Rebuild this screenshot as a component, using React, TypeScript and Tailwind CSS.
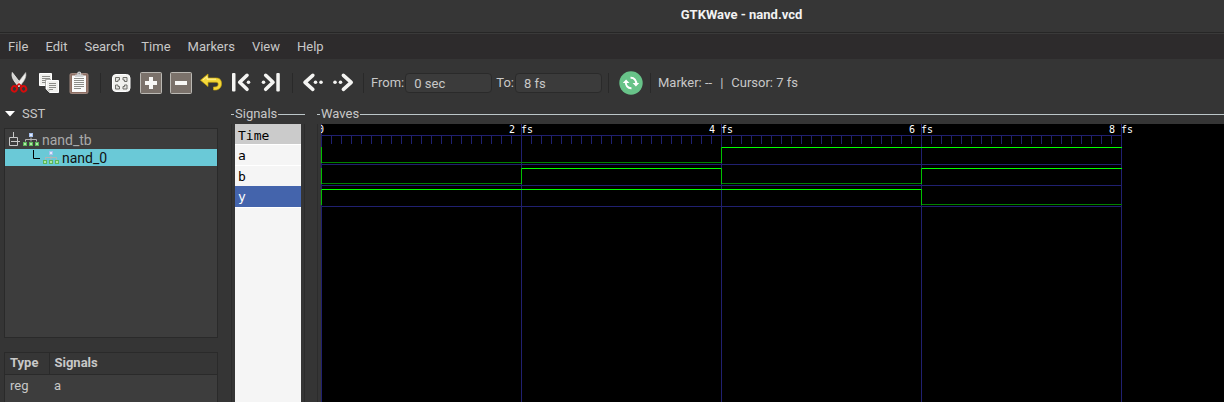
import { useState } from 'react';
import type { ReactNode } from 'react';

const MENUS = ['File', 'Edit', 'Search', 'Time', 'Markers', 'View', 'Help'];

const FS_WIDTH = 100;
const END_FS = 8;
const ROW = 21;

type Trace = { name: string; start: 0 | 1; toggles: number[] };

const TRACES: Trace[] = [
  { name: 'a', start: 0, toggles: [4] },
  { name: 'b', start: 0, toggles: [2, 4, 6] },
  { name: 'y', start: 1, toggles: [6] },
];

function Icon({ children }: { children: ReactNode }) {
  return (
    <svg viewBox="0 0 24 24" className="size-6" aria-hidden="true">
      {children}
    </svg>
  );
}

function Lines({ x, ys, w }: { x: number; ys: number[]; w: number }) {
  return (
    <>
      {ys.map((y, i) => (
        <rect key={y} x={x} y={y} width={i === ys.length - 1 ? w - 3 : w} height="1" fill="#8c8c88" />
      ))}
    </>
  );
}

const CutIcon = () => (
  <Icon>
    <path d="M5.3 1.5c-1 3.500 .6 6.800 2.500 9.400l3.800 4.800 2.600-2.600z" fill="#d4d4d2" stroke="#f2f2f0" strokeWidth=".8" />
    <path d="M18.700 1.500c1 3.500-.6 6.800-2.500 9.400l-3.800 4.800-2.600-2.600z" fill="#efefed" stroke="#b8b8b6" strokeWidth=".6" />
    <path d="M9 15.500 12 13l3 2.500" stroke="#d40c0c" strokeWidth="1.600" fill="none" />
    <ellipse cx="7.400" cy="17.800" rx="2.600" ry="2.800" fill="none" stroke="#d40c0c" strokeWidth="2" transform="rotate(25 7.400 17.800)" />
    <ellipse cx="16.600" cy="17.800" rx="2.600" ry="2.800" fill="none" stroke="#d40c0c" strokeWidth="2" transform="rotate(-25 16.600 17.800)" />
  </Icon>
);

const CopyIcon = () => (
  <Icon>
    <path d="M2.500 2.500h12v9l-3 3h-9z" fill="#f0f0ed" stroke="#fff" />
    <Lines x={5} ys={[5, 7, 9, 11]} w={8} />
    <path d="M9.500 9.500h12v12h-9l-3-3z" fill="#f0f0ed" stroke="#fff" />
    <path d="M8.500 18V8.500H14" fill="none" stroke="#9a9a96" strokeWidth=".8" />
    <Lines x={12} ys={[12, 14, 16, 18]} w={7} />
    <path d="M9.500 18.500h3v3z" fill="#c4c4c0" />
  </Icon>
);

const PasteIcon = () => (
  <Icon>
    <rect x="3" y="2.500" width="18" height="20" rx="1.500" fill="#8d6e63" stroke="#a1887f" />
    <rect x="5" y="4.500" width="14" height="16.500" fill="#fafafa" />
    <Lines x={7} ys={[7, 9, 11, 13, 15, 17]} w={10} />
    <path d="M8 6V4.500c0-.8.500-1 1.200-1h1V2.500a2 2 0 0 1 4 0v1h1c.7 0 1.200.2 1.200 1V6z" fill="#cfd0d2" />
    <circle cx="12.200" cy="2.500" r=".8" fill="#8d8d8d" />
  </Icon>
);

const FitIcon = () => (
  <Icon>
    <rect x="3.500" y="3.500" width="17.500" height="17" rx="3.500" fill="#f1f1ee" stroke="#fff" />
    <path
      d="M6.500 10.500v-4h4v2.500h-1.500v1.500zM14 6.500h4v4h-2.500V9H14zM6.500 14H9v1.500h1.500V18h-4zM15.500 14H18v4h-4v-2.500h1.500z"
      fill="#e2e2de"
      stroke="#6f6f6a"
      strokeWidth="1"
    />
  </Icon>
);

const PlusIcon = () => (
  <Icon>
    <rect x="1.500" y="1.500" width="21" height="21" rx="1" fill="#7b726b" stroke="#bab8b3" />
    <path d="M10 6h4v4h4v4h-4v4h-4v-4H6v-4h4z" fill="#f7f7f5" />
  </Icon>
);

const MinusIcon = () => (
  <Icon>
    <rect x="1.500" y="1.500" width="21" height="21" rx="1" fill="#7b726b" stroke="#bab8b3" />
    <rect x="6" y="10" width="12" height="4" fill="#f7f7f5" />
  </Icon>
);

const UndoIcon = () => (
  <Icon>
    <path
      d="M1.500 9.200 9 3v4h8.500c3.200 0 5 2.200 5 5.500 0 4-2.500 6.500-6.500 6.500h-1.500v-3H16c2 0 3.200-1 3.200-2.800 0-1.300-.7-2-2-2H9v4.300z"
      fill="#f5d93b"
      stroke="#c9a60a"
      strokeWidth=".7"
    />
    <path d="M4 9 8 5.500v2.700h9" fill="none" stroke="#fff2a0" />
  </Icon>
);

function Chevron({ d, dots, bar }: { d: string; dots: number[]; bar?: number }) {
  return (
    <Icon>
      {bar !== undefined && <rect x={bar} y="2" width="3.500" height="18.500" rx="1" fill="#f4f4f2" />}
      <path d={d} fill="none" stroke="#f4f4f2" strokeWidth="3.600" strokeLinecap="round" strokeLinejoin="round" />
      {dots.map((x) => (
        <circle key={x} cx={x} cy="11.300" r="1.800" fill="#f4f4f2" />
      ))}
    </Icon>
  );
}

const ReloadIcon = () => (
  <Icon>
    <circle cx="12" cy="12" r="11.700" fill="#68c389" />
    <path d="M10.800 6.900A5.300 5.300 0 0 1 17.200 12.500M13.200 17.100A5.300 5.300 0 0 1 6.800 11.500" fill="none" stroke="#fff" strokeWidth="2" transform="rotate(8 12 12)" />
    <path d="M13.600 12h6.600l-3.300 3.600zM3.800 12h6.600L7.100 8.400z" fill="#fff" />
  </Icon>
);

function HierarchyIcon() {
  return (
    <svg viewBox="0 0 16 14" className="h-3.5 w-4 shrink-0" aria-hidden="true">
      <rect x="6" y="0" width="4" height="4" fill="#a5bfee" />
      <rect x="7" y="1" width="2" height="2" fill="#e4ecfb" />
      <path d="M8 4.500v4M2.500 8.500v-2h11v2" fill="none" stroke="#b4b4b4" />
      {[0, 6, 12].map((x) => (
        <g key={x}>
          <rect x={x} y="9" width="4" height="4" fill="#5cb85a" />
          <rect x={x + 1} y="10" width="2" height="2" fill="#b0e8a6" />
        </g>
      ))}
    </svg>
  );
}

function ToolButton({ label, children }: { label: string; children: ReactNode }) {
  return (
    <button type="button" aria-label={label} className="flex h-9 w-[30px] shrink-0 items-center justify-center">
      {children}
    </button>
  );
}

function Separator({ className = 'w-3' }: { className?: string }) {
  return (
    <div className={`flex h-5 shrink-0 justify-center ${className}`}>
      <div className="w-px bg-[#292929]" />
    </div>
  );
}

function TimeField({ id, label, initial }: { id: string; label: string; initial: string }) {
  const [value, setValue] = useState(initial);
  return (
    <div className="flex items-center">
      <label htmlFor={id} className="whitespace-nowrap pr-px">{label}</label>
      <input
        id={id}
        value={value}
        onChange={(e) => setValue(e.target.value)}
        className="h-5 w-[87px] rounded-sm border border-[#2a2a2a] bg-[#3b3b3b] px-2 outline-none"
      />
    </div>
  );
}

function Toolbar() {
  return (
    <div role="toolbar" className="flex h-[46px] items-center px-1 pt-0.5">
      <ToolButton label="Cut"><CutIcon /></ToolButton>
      <ToolButton label="Copy"><CopyIcon /></ToolButton>
      <ToolButton label="Paste"><PasteIcon /></ToolButton>
      <Separator />
      <ToolButton label="Zoom fit"><FitIcon /></ToolButton>
      <ToolButton label="Zoom in"><PlusIcon /></ToolButton>
      <ToolButton label="Zoom out"><MinusIcon /></ToolButton>
      <ToolButton label="Undo zoom"><UndoIcon /></ToolButton>
      <ToolButton label="Zoom to start"><Chevron d="M18 4.300 10.700 11.300l7.300 7" dots={[19.5]} bar={3} /></ToolButton>
      <ToolButton label="Zoom to end"><Chevron d="M6.700 4.300 14 11.300l-7.300 7" dots={[4.5]} bar={17.3} /></ToolButton>
      <Separator />
      <ToolButton label="Previous edge"><Chevron d="M11.800 4.300 4 11.300l7.800 7" dots={[14.5, 20]} /></ToolButton>
      <ToolButton label="Next edge"><Chevron d="M12.400 4.300 20.200 11.300l-7.800 7" dots={[4, 9.5]} /></ToolButton>
      <Separator className="w-2.5" />
      <div className="ml-[3px] flex gap-1">
        <TimeField id="from" label="From:" initial="0 sec" />
        <TimeField id="to" label="To:" initial="8 fs" />
      </div>
      <Separator className="w-3.5" />
      <ToolButton label="Reload"><ReloadIcon /></ToolButton>
      <Separator className="w-2.5" />
      <p className="ml-0.5 flex gap-2 whitespace-nowrap">
        <span>Marker: --</span>
        <span>|</span>
        <span>Cursor: 7 fs</span>
      </p>
    </div>
  );
}

function Sidebar() {
  return (
    <aside className="flex w-[218px] shrink-0 flex-col pl-1">
      <button type="button" className="flex h-[22px] items-center gap-[7px] pb-1.5 text-left">
        <svg viewBox="0 0 10 6" className="ml-px h-1.5 w-2.5" aria-hidden="true">
          <path d="M0 0h10L5 5.500z" fill="#fff" />
        </svg>
        SST
      </button>
      <div role="tree" className="h-[210px] border border-[#2a2a2a] bg-[#3d3d3d] pt-px text-sm leading-4">
        <div role="treeitem" aria-expanded="true" className="flex h-[19px] items-center gap-[3px] pl-1 text-[#a9a9a9]">
          <svg viewBox="0 0 11 16" className="h-4 w-[11px]" aria-hidden="true">
            <path d="M4.500 0v5M.5 5.500h8v8h-8zM2 9.500h9" fill="none" stroke="#c8c8c8" />
          </svg>
          <HierarchyIcon />
          nand_tb
        </div>
        <div role="treeitem" aria-selected="true" className="flex h-[17px] items-center gap-[3px] bg-[#6ac9d7] pl-7 text-[#111]">
          <svg viewBox="0 0 7 16" className="h-4 w-[7px]" aria-hidden="true">
            <path d="M.5 0v8.500H7" fill="none" stroke="#000" />
          </svg>
          <HierarchyIcon />
          nand_0
        </div>
      </div>
      <div className="mt-3.5 flex-1 border border-b-0 border-[#2a2a2a] bg-[#3d3d3d]">
        <table className="w-full border-collapse text-left">
          <thead>
            <tr className="h-[21px] border-b border-[#2a2a2a] bg-[#363636]">
              <th className="w-11 border-r border-[#2a2a2a] px-[5px]">Type</th>
              <th className="px-[5px]">Signals</th>
            </tr>
          </thead>
          <tbody>
            <tr className="h-6">
              <td className="px-[5px]">reg</td>
              <td className="px-[5px]">a</td>
            </tr>
          </tbody>
        </table>
      </div>
    </aside>
  );
}

function Frame({ title, className, children }: { title: string; className: string; children: ReactNode }) {
  return (
    <section className={`flex flex-col ${className}`}>
      <div className="flex h-[18px] items-center gap-px pb-0.5">
        <div className="h-px w-[3px] bg-[#bcc6c8]" />
        <h2>{title}</h2>
        <div className="h-px flex-1 bg-[#bcc6c8]" />
      </div>
      {children}
    </section>
  );
}

function SignalList() {
  return (
    <div className="flex flex-1 border-x border-[#2c2c2c] px-[3px]">
      <ul className="flex-1 bg-[#f5f5f5] font-['DejaVu_Sans_Mono',monospace] text-[13px] leading-[21px] text-black">
        <li className="h-5 bg-[#cbcbcb] pl-[3px] pt-px">Time</li>
        {TRACES.map((t) => (
          <li
            key={t.name}
            className={t.name === 'y' ? 'h-[21px] bg-[#4464ac] pl-[3px] text-white' : 'h-[21px] border-t border-white pl-[3px]'}
          >
            {t.name}
          </li>
        ))}
        <li className="h-px bg-white" />
      </ul>
    </div>
  );
}

function WaveRow({ trace, index }: { trace: Trace; index: number }) {
  const high = 23.5 + index * ROW;
  const low = high + 15;
  const points = [0, ...trace.toggles, END_FS];
  return (
    <g>
      {points.slice(0, -1).map((from, i) => {
        const isHigh = (trace.start + i) % 2 === 1;
        const y = isHigh ? high : low;
        return (
          <line key={from} x1={from * FS_WIDTH} x2={points[i + 1] * FS_WIDTH + 1} y1={y} y2={y} stroke={isHigh ? '#00ff00' : '#008000'} />
        );
      })}
      {points.slice(0, -1).map((x) => (
        <line key={x} x1={x * FS_WIDTH + 0.5} x2={x * FS_WIDTH + 0.5} y1={high - 0.5} y2={low + 0.5} stroke="#00c000" />
      ))}
    </g>
  );
}

function WaveView() {
  const ticks = Array.from({ length: 81 }, (_, i) => i);
  return (
    <div className="flex flex-1 border-l border-[#2c2c2c] pl-[3px]">
      <svg className="h-full w-full bg-black" role="img" aria-label="Waveforms">
        <g shapeRendering="crispEdges">
          {[0, 2, 4, 6, 8].map((fs) => (
            <rect key={fs} x={fs * FS_WIDTH} y="0" width="1" height="100%" fill="#202070" />
          ))}
          <rect x="0" y="11" width="801" height="1" fill="#202070" />
          {ticks.map((t) => (
            <rect key={t} x={t * 10} y="12" width="1" height="8" fill="#202070" />
          ))}
          {TRACES.map((t, i) => (
            <rect key={t.name} x="0" y={40 + i * ROW} width="801" height="1" fill="#202070" />
          ))}
          {TRACES.map((t, i) => (
            <WaveRow key={t.name} trace={t} index={i} />
          ))}
        </g>
        <g fill="#fff" className="font-['DejaVu_Sans_Mono',monospace] text-[10px]">
          <text x="-3" y="9">0</text>
          {[2, 4, 6, 8].map((fs) => (
            <text key={fs} x={fs * FS_WIDTH - 12} y="9">{`${fs} fs`}</text>
          ))}
        </g>
      </svg>
    </div>
  );
}

export default function App() {
  return (
    <div className="flex h-screen flex-col overflow-hidden bg-[#353535] font-[Roboto,sans-serif] text-[13px] leading-4 text-[#c8c8c8]">
      <header className="flex h-[33px] shrink-0 items-center justify-center border-b border-[#262626] bg-[#363636] pb-0.5 pl-[259px]">
        <h1 className="font-bold text-[#f2f2f2]">GTKWave - nand.vcd</h1>
      </header>
      <nav className="flex h-[26px] shrink-0 items-center gap-[17px] border-t border-[#3a3a3a] bg-[#2d2b2c] px-2">
        {MENUS.map((m) => (
          <button key={m} type="button">{m}</button>
        ))}
      </nav>
      <Toolbar />
      <main className="flex min-h-0 flex-1 pt-px">
        <Sidebar />
        <Frame title="Signals" className="ml-[13px] w-[74px] shrink-0">
          <SignalList />
        </Frame>
        <Frame title="Waves" className="ml-3 min-w-0 flex-1">
          <WaveView />
        </Frame>
      </main>
    </div>
  );
}
